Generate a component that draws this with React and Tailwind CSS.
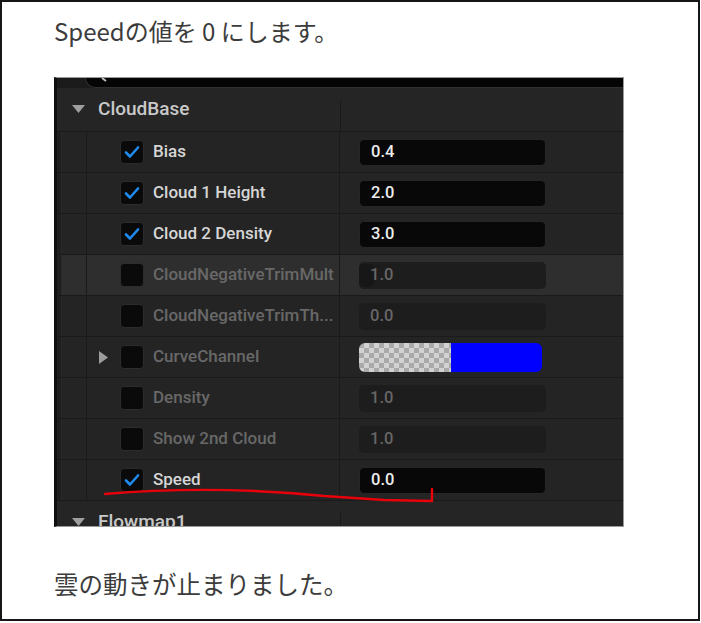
import React from "react";

const rows = [
  { label: "Bias", value: "0.4", on: true },
  { label: "Cloud 1 Height", value: "2.0", on: true },
  { label: "Cloud 2 Density", value: "3.0", on: true },
  { label: "CloudNegativeTrimMult", value: "1.0", on: false, hover: true, knob: true },
  { label: "CloudNegativeTrimTh...", value: "0.0", on: false },
  { label: "CurveChannel", on: false, curve: true },
  { label: "Density", value: "1.0", on: false },
  { label: "Show 2nd Cloud", value: "1.0", on: false },
  { label: "Speed", value: "0.0", on: true },
];

const Check = ({ on }) => (
  <div className="w-[24px] h-[24px] shrink-0 rounded-[4px] bg-[#0a0a0a] border border-[#2c2c2c] flex items-center justify-center">
    {on && (
      <svg width="18" height="18" viewBox="0 0 18 18">
        <path d="M3 9.5 L7 13.5 L15 4.5" fill="none" stroke="#1f8bf0" strokeWidth="2.6" strokeLinecap="round" strokeLinejoin="round" />
      </svg>
    )}
  </div>
);

const CurveStrip = () => (
  <div className="w-[183px] h-[29px] rounded-[6px] overflow-hidden flex">
    <svg width="92" height="29">
      <defs>
        <pattern id="chk" width="10" height="10" patternUnits="userSpaceOnUse">
          <rect width="10" height="10" fill="#d2d2d2" />
          <rect width="5" height="5" fill="#a9a9a9" />
          <rect x="5" y="5" width="5" height="5" fill="#a9a9a9" />
        </pattern>
      </defs>
      <rect width="92" height="29" fill="url(#chk)" />
    </svg>
    <div className="flex-1 bg-[#0000ff]" />
  </div>
);

const Header = ({ title }) => (
  <div className="flex h-[44px] shrink-0 bg-[#252525] border-b border-[#1a1a1a]">
    <div className="w-[283px] flex items-center">
      <svg width="13" height="9" viewBox="0 0 13 9" className="ml-[15px]">
        <path d="M0 0 L13 0 L6.5 8 Z" fill="#9e9e9e" />
      </svg>
      <span className="ml-[13px] text-[19px] font-medium text-[#c9c9c9]">{title}</span>
    </div>
    <div className="flex-1 border-l border-[#1a1a1a] mt-[12px]" />
  </div>
);

const Row = ({ row }) => (
  <div className={`flex h-[41px] shrink-0 border-b border-[#1a1a1a] ${row.hover ? "bg-[#2e2e2e]" : "bg-[#242424]"}`}>
    <div className="w-[5px] bg-[#1e1e1e] border-r border-[#2b2b2b]" />
    <div className="w-[25px] border-r border-[#1a1a1a]" />
    <div className="w-[253px] flex items-center border-r border-[#1a1a1a] overflow-hidden">
      <div className="w-[33px] shrink-0 flex items-center">
        {row.curve && (
          <svg width="9" height="13" viewBox="0 0 9 13" className="ml-[12px]">
            <path d="M0 0 L9 6.5 L0 13 Z" fill="#9c9c9c" />
          </svg>
        )}
      </div>
      <Check on={row.on} />
      <span className={`ml-[9px] text-[17px] font-medium whitespace-nowrap ${row.on ? "text-[#d6d6d6]" : "text-[#686868]"}`}>
        {row.label}
      </span>
    </div>
    <div className="flex-1 flex items-center pl-[19px]">
      {row.curve ? (
        <CurveStrip />
      ) : (
        <div
          className={`relative w-[187px] h-[27px] rounded-[5px] flex items-center pl-[11px] text-[16.5px] font-medium ${
            row.on ? "bg-[#080808] border border-[#262626] text-[#ececec]" : "bg-[#1d1d1d] text-[#666666]"
          }`}
        >
          {row.knob && <div className="absolute left-[0px] top-[2px] w-[15px] h-[23px] rounded-[5px] bg-[#171717]" />}
          <span className="relative">{row.value}</span>
        </div>
      )}
    </div>
  </div>
);

export default function App() {
  return (
    <div className="w-[700px] h-[621px] border-2 border-[#161616] bg-white pl-[52px]" style={{ fontFamily: "'Noto Sans CJK JP', 'Noto Sans', sans-serif" }}>
      <div className="mt-[13px] h-[32px] leading-[32px] text-[24px] text-[#3c3c3c]">
        Speedの値を 0 にします。
      </div>

      <div className="relative mt-[30px] w-[570px]">
        <div
          className="h-[450px] flex flex-col overflow-hidden bg-[#242424] border-t border-r border-b border-[#9a9a9a] border-l-[3px] border-l-[#0f0f0f]"
          style={{ fontFamily: "Roboto, 'Liberation Sans', sans-serif" }}
        >
          {/* search box bottom */}
          <div className="flex h-[10px] shrink-0 bg-[#1b1b1b]">
            <div className="w-[28px]" />
            <div className="flex-1 bg-[#050505] rounded-bl-[10px] border-l border-b border-[#303030]">
              <svg width="30" height="9" className="ml-[12px]">
                <path d="M4 0 L8 3" stroke="#bdbdbd" strokeWidth="2" />
              </svg>
            </div>
          </div>

          <Header title="CloudBase" />
          {rows.map((r, i) => (
            <Row key={i} row={r} />
          ))}
          <Header title="Flowmap1" />
        </div>

        {/* red annotation */}
        <svg className="absolute inset-0 w-full h-full pointer-events-none overflow-visible">
          <path
            d="M51 417 C110 412 190 411 270 419 L330 423 L378 424 L378 412"
            fill="none"
            stroke="#e8000b"
            strokeWidth="2.4"
            strokeLinecap="round"
            strokeLinejoin="round"
          />
        </svg>
      </div>

      <div className="mt-[41px] h-[32px] leading-[32px] text-[24.5px] text-[#3c3c3c]">
        雲の動きが止まりました。
      </div>
    </div>
  );
}
